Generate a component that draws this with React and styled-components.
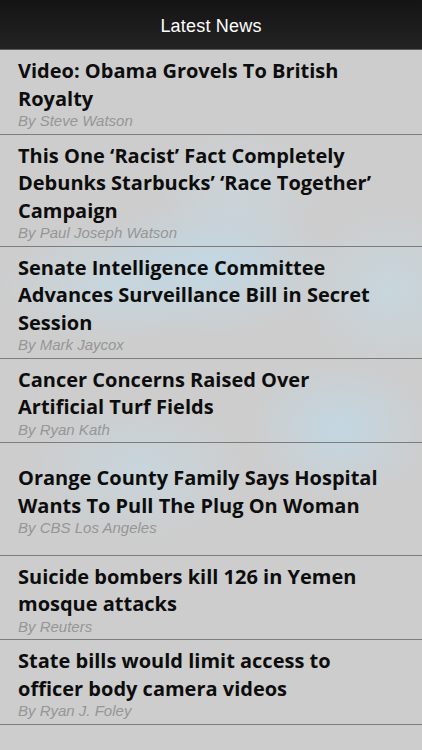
import React from 'react'
import styled, { createGlobalStyle } from 'styled-components'

const GlobalStyle = createGlobalStyle`
  html, body {
    margin: 0;
    padding: 0;
    background: #cdcdcd;
  }
  * { box-sizing: border-box; }
`

const Screen = styled.div`
  width: 422px;
  height: 750px;
  overflow: hidden;
  display: flex;
  flex-direction: column;
  background:
    radial-gradient(ellipse 120px 70px at 215px 265px, rgba(192, 218, 232, 0.85), rgba(192, 218, 232, 0)),
    radial-gradient(ellipse 110px 60px at 110px 285px, rgba(195, 220, 232, 0.6), rgba(195, 220, 232, 0)),
    radial-gradient(ellipse 90px 80px at 390px 290px, rgba(195, 220, 232, 0.6), rgba(195, 220, 232, 0)),
    radial-gradient(ellipse 90px 70px at 340px 430px, rgba(192, 218, 232, 0.75), rgba(192, 218, 232, 0)),
    radial-gradient(ellipse 110px 70px at 140px 470px, rgba(195, 220, 232, 0.55), rgba(195, 220, 232, 0)),
    radial-gradient(ellipse 80px 60px at 240px 190px, rgba(200, 220, 230, 0.45), rgba(200, 220, 230, 0)),
    #cdcdcd;
`

const Header = styled.header`
  height: 50px;
  flex-shrink: 0;
  display: flex;
  align-items: center;
  justify-content: center;
  padding-top: 3px;
  background: linear-gradient(#141414, #232323);
  border-bottom: 1px solid #5a5a5a;
  color: #ffffff;
  font-family: "Liberation Sans", Arial, sans-serif;
  font-size: 18px;
  letter-spacing: 0.2px;
`

const List = styled.ul`
  list-style: none;
  margin: 0;
  padding: 0;
`

const Row = styled.li`
  padding: ${p => (p.$tall ? '21px 40px 18px 18px' : '7px 40px 4px 18px')};
  border-bottom: 1px solid #7d7d7d;
`

const Title = styled.h2`
  margin: 0;
  font-family: "Open Sans", "Noto Sans", sans-serif;
  font-weight: 700;
  font-size: 20px;
  line-height: 27.5px;
  color: #0d0d0d;
`

const Byline = styled.div`
  font-family: "Liberation Sans", Arial, sans-serif;
  font-style: italic;
  font-size: 15px;
  line-height: 17.5px;
  color: #969696;
`

const news = [
  { title: 'Video: Obama Grovels To British Royalty', by: 'Steve Watson' },
  { title: 'This One \u2018Racist\u2019 Fact Completely Debunks Starbucks\u2019 \u2018Race Together\u2019 Campaign', by: 'Paul Joseph Watson' },
  { title: 'Senate Intelligence Committee Advances Surveillance Bill in Secret Session', by: 'Mark Jaycox' },
  { title: 'Cancer Concerns Raised Over Artificial Turf Fields', by: 'Ryan Kath' },
  { title: 'Orange County Family Says Hospital Wants To Pull The Plug On Woman', by: 'CBS Los Angeles', tall: true },
  { title: 'Suicide bombers kill 126 in Yemen mosque attacks', by: 'Reuters' },
  { title: 'State bills would limit access to officer body camera videos', by: 'Ryan J. Foley' },
]

export default function App() {
  return (
    <>
      <GlobalStyle />
      <Screen>
        <Header>Latest News</Header>
        <List>
          {news.map((item, i) => (
            <Row key={i} $tall={item.tall}>
              <Title>{item.title}</Title>
              <Byline>By {item.by}</Byline>
            </Row>
          ))}
        </List>
      </Screen>
    </>
  )
}
